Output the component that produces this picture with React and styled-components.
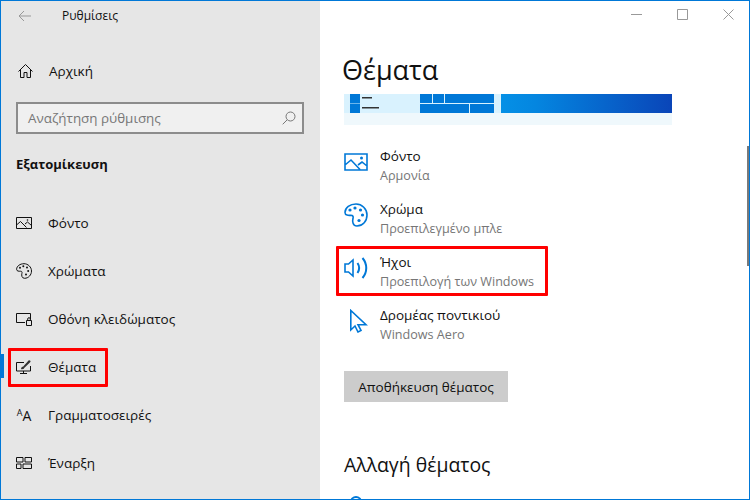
import React from 'react';
import styled, { createGlobalStyle } from 'styled-components';

const Global = createGlobalStyle`
    html, body { margin: 0; padding: 0; background: #fff; }
    * { box-sizing: border-box; }
`

const Win = styled.div`
    width: 750px;
    height: 500px;
    border: 1px solid #0078d7;
    display: flex;
    overflow: hidden;
    font-family: "Open Sans", "Noto Sans", sans-serif;
    color: #111;
`
const Side = styled.div`
    width: 319px;
    height: 498px;
    flex: none;
    background: #e6e6e6;
    overflow: hidden;
`
const TitleBar = styled.div`
    height: 29px;
    display: flex;
    align-items: center;
    padding-left: 17px;
    gap: 30px;
    font-size: 12px;
`
const HomeRow = styled.div`
    height: 48px;
    margin-top: 17px;
    display: flex;
    align-items: center;
    padding-left: 17px;
    gap: 16px;
    font-size: 13.5px;
`
const Search = styled.div`
    height: 32px;
    margin: 7px 16px 0 15px;
    border: 2px solid #8c8c8c;
    background: #f0f0f0;
    display: flex;
    align-items: center;
    justify-content: space-between;
    padding: 0 6px 0 10px;
    font-size: 13.4px;
    color: #777;
`
const SectionTitle = styled.div`
    margin: 20px 0 0 15px;
    height: 20px;
    line-height: 20px;
    font-size: 13px;
    font-weight: 700;
`
const NavList = styled.div`
    margin-top: 25px;
    display: flex;
    flex-direction: column;
`
const NavItem = styled.div`
    position: relative;
    height: 48px;
    display: flex;
    align-items: center;
    padding-left: 15px;
    gap: 16px;
    font-size: 13.5px;
`
const NavIcon = styled.span`
    width: 16px;
    height: 16px;
    flex: none;
    display: flex;
    align-items: center;
    justify-content: center;
`
const Indicator = styled.span`
    position: absolute;
    left: 0;
    top: 11px;
    width: 3px;
    height: 24px;
    background: #0078d7;
`
const RedBox = styled.span`
    position: absolute;
    left: ${props => props.left}px;
    top: ${props => props.top}px;
    width: ${props => props.w}px;
    height: ${props => props.h}px;
    border: 3px solid #f00;
    border-radius: 1px;
    pointer-events: none;
`
const FontGlyph = styled.span`
    display: flex;
    align-items: flex-end;
    color: #111;
    font-family: "Open Sans", sans-serif;
    line-height: 1;
    span:first-child { font-size: 9px; margin-bottom: 6px; }
    span:last-child { font-size: 14px; }
`

const Main = styled.div`
    position: relative;
    flex: 1;
    height: 498px;
    overflow: hidden;
    background: #fff;
`
const Controls = styled.div`
    height: 27px;
    display: flex;
    align-items: center;
    justify-content: flex-end;
    gap: 35px;
    padding-right: 15px;
`
const Content = styled.div`
    padding-left: 24px;
    display: flex;
    flex-direction: column;
`
const PageTitle = styled.h1`
    margin: 20px 0 0 -2px;
    height: 46px;
    line-height: 43px;
    font-size: 27px;
    font-weight: 400;
`
const Preview = styled.svg`
    display: block;
    width: 328px;
    height: 31px;
`
const Options = styled.div`
    margin-top: 21px;
    display: flex;
    flex-direction: column;
`
const Option = styled.div`
    position: relative;
    height: 53px;
    display: flex;
    gap: 12px;
`
const OptionIcon = styled.span`
    width: 24px;
    height: 32px;
    flex: none;
    display: flex;
    align-items: center;
    justify-content: center;
`
const OptionText = styled.div`
    display: flex;
    flex-direction: column;
`
const OptionName = styled.span`
    font-size: 13.5px;
    height: 21px;
    line-height: 20px;
`
const OptionSub = styled.span`
    font-size: 12.6px;
    height: 18px;
    line-height: 18px;
    color: #767676;
`
const SaveButton = styled.div`
    margin-top: 13px;
    width: 164px;
    height: 31px;
    background: #ccc;
    display: flex;
    align-items: center;
    justify-content: center;
    font-size: 13.5px;
`
const SubHeading = styled.h2`
    margin: 48px 0 0 0;
    height: 30px;
    line-height: 30px;
    font-size: 19.4px;
    font-weight: 400;
`
const PartialIcon = styled.span`
    display: block;
    margin: 16px 0 0 6px;
    width: 12px;
    height: 12px;
    border: 2px solid #0078d7;
    border-radius: 50%;
`
const Scrollbar = styled.span`
    position: absolute;
    right: 0;
    top: 145px;
    width: 2px;
    height: 120px;
    background: #7a7a7a;
`

const line = { fill: 'none', stroke: 'currentColor', strokeWidth: 1 };

const BackIcon = () => (
    <svg width="14" height="12" viewBox="0 0 14 12" color="#999">
        <path d="M13 6H1M6 1L1 6l5 5" {...line} />
    </svg>
);
const HomeIcon = () => (
    <svg width="15" height="14" viewBox="0 0 15 14" color="#111">
        <path d="M.5 7.5l7-7 7 7M2.5 5.5v8h3.5v-5h3v5h3.5v-8" {...line} />
    </svg>
);
const SearchIcon = () => (
    <svg width="14" height="14" viewBox="0 0 14 14" color="#777">
        <circle cx="8.5" cy="5.5" r="4.5" {...line} />
        <path d="M5.2 8.8L.7 13.3" {...line} />
    </svg>
);
const PictureIcon = () => (
    <svg width="16" height="12" viewBox="0 0 16 12" color="#111">
        <path d="M.5.5h15v11H.5zM.5 8l4-3.5 6 6M9 7l2.5-2 4 3.5" {...line} />
        <circle cx="11.5" cy="3" r=".8" fill="currentColor" />
    </svg>
);
const PaletteIcon = () => (
    <svg width="16" height="16" viewBox="0 0 16 16" color="#111">
        <path d="M8 .7C4 .7.6 3.2.6 6.3c0 2 2.4 2 3.8 1.9 1.6 0 1.9.9 1.5 2.2-.5 1.7-.2 4.9 2.6 4.9 4 0 7-3.4 7-7.3S12 .7 8 .7z" {...line} />
        <circle cx="4" cy="4.7" r="1" fill="currentColor" />
        <circle cx="7.3" cy="3.2" r="1" fill="currentColor" />
        <circle cx="11" cy="4.5" r="1" fill="currentColor" />
        <circle cx="12.2" cy="8" r="1" fill="currentColor" />
        <circle cx="10" cy="11.5" r="1" fill="currentColor" />
    </svg>
);
const LockIcon = () => (
    <svg width="16" height="13" viewBox="0 0 16 13" color="#111">
        <path d="M9 9.5H.5V.5h14v6M10.5 7.5h5v5h-5zM11.7 7.5V6a1.3 1.3 0 0 1 2.6 0v1.5" {...line} />
    </svg>
);
const ThemeIcon = () => (
    <svg width="16" height="16" viewBox="0 0 16 16" color="#111">
        <path d="M8 3.5H.5v8.500h14V7M7.500 12v2.500M4 14.500h7" {...line} />
        <path d="M5 10c.2-1.600 1-2.200 2-2.200L12.800 1.300c.7-.6 2.300.8 1.600 1.600L8.200 9C7.800 10.200 6.400 10.400 5 10z" fill="#333" />
    </svg>
);
const StartIcon = () => (
    <svg width="16" height="12" viewBox="0 0 16 12" color="#111">
        <path d="M.5.5h6.500v4.500H.5zM9 .5h6.500v4.500H9zM.5 7h4.500v4.500H.5zM7 7h8.500v4.500H7z" {...line} />
    </svg>
);

const blue = { fill: 'none', stroke: '#0078d7', strokeWidth: 1.6 };

const BigPicture = () => (
    <svg width="24" height="18" viewBox="0 0 24 18">
        <path d="M1 1h22v16H1zM1 12l6-5 9 9.500M14 12l4-3 5 4" {...blue} />
        <circle cx="17.500" cy="5" r="1.500" fill="#0078d7" />
    </svg>
);
const BigPalette = () => (
    <svg width="24" height="24" viewBox="0 0 24 24">
        <path d="M12 1C6 1 1 4.800 1 9.500c0 3 3.600 3 5.700 2.800 2.400 0 2.800 1.400 2.300 3.300-.8 2.600-.3 7.400 3.900 7.400C18.900 23 23 18 23 12S18 1 12 1z" {...blue} />
        <circle cx="6" cy="7" r="1.600" fill="#0078d7" />
        <circle cx="11" cy="5" r="1.600" fill="#0078d7" />
        <circle cx="16.500" cy="7" r="1.600" fill="#0078d7" />
        <circle cx="18.500" cy="12" r="1.600" fill="#0078d7" />
        <circle cx="15" cy="17.500" r="1.600" fill="#0078d7" />
    </svg>
);
const BigSpeaker = () => (
    <svg width="24" height="24" viewBox="0 0 24 24">
        <path d="M1 8h3.500L9 4v16l-4.500-4H1z" {...blue} />
        <path d="M13.500 7c2 3 2 7 0 10M18.500 2c5 6 5 14 0 20" {...blue} strokeWidth="2" />
    </svg>
);
const BigCursor = () => (
    <svg width="24" height="24" viewBox="0 0 24 24">
        <path d="M6.800 1.500V21l4.200-4 3 6 3-1.500-3-5.800H22z" {...blue} />
    </svg>
);

const PreviewArt = () => (
    <Preview viewBox="0 0 328 31">
        <defs>
            <linearGradient id="accent" x1="0" x2="1">
                <stop offset="0" stopColor="#0590e6" />
                <stop offset="0.2" stopColor="#0486e0" />
                <stop offset="1" stopColor="#0a45b8" />
            </linearGradient>
        </defs>
        <rect width="328" height="31" fill="#eff8fc" />
        <rect width="157" height="19" fill="#d9f2fe" />
        <rect x="157" width="171" height="19" fill="url(#accent)" />
        <rect x="6" width="10" height="9" fill="#0078d7" />
        <rect x="6" y="9.500" width="10" height="9.500" fill="#0078d7" />
        <rect x="18" y="3" width="10" height="1.500" fill="#333" />
        <rect x="18" y="13" width="17" height="1.500" fill="#333" />
        <rect x="76" width="12" height="9" fill="#0078d7" />
        <rect x="89" width="11" height="9" fill="#0078d7" />
        <rect x="101" width="49" height="9" fill="#0078d7" />
        <rect x="76" y="10" width="49" height="9" fill="#0078d7" />
        <rect x="126" y="10" width="24" height="9" fill="#0078d7" />
    </Preview>
);

function App() {
    return (
        <Win>
            <Global />
            <Side>
                <TitleBar><BackIcon /><span>Ρυθμίσεις</span></TitleBar>
                <HomeRow><HomeIcon /><span>Αρχική</span></HomeRow>
                <Search><span>Αναζήτηση ρύθμισης</span><SearchIcon /></Search>
                <SectionTitle>Εξατομίκευση</SectionTitle>
                <NavList>
                    <NavItem><NavIcon><PictureIcon /></NavIcon>Φόντο</NavItem>
                    <NavItem><NavIcon><PaletteIcon /></NavIcon>Χρώματα</NavItem>
                    <NavItem><NavIcon><LockIcon /></NavIcon>Οθόνη κλειδώματος</NavItem>
                    <NavItem>
                        <Indicator />
                        <NavIcon><ThemeIcon /></NavIcon>Θέματα
                        <RedBox left={7} top={5} w={100} h={39} />
                    </NavItem>
                    <NavItem><NavIcon><FontGlyph><span>A</span><span>A</span></FontGlyph></NavIcon>Γραμματοσειρές</NavItem>
                    <NavItem><NavIcon><StartIcon /></NavIcon>Έναρξη</NavItem>
                </NavList>
            </Side>
            <Main>
                <Controls>
                    <svg width="11" height="11" viewBox="0 0 11 11"><path d="M0 5.500h11" stroke="#999" fill="none" /></svg>
                    <svg width="11" height="11" viewBox="0 0 11 11"><path d="M.5.500h10v10H.5z" stroke="#999" fill="none" /></svg>
                    <svg width="11" height="11" viewBox="0 0 11 11"><path d="M.5.500l10 10M10.500.500l-10 10" stroke="#999" fill="none" /></svg>
                </Controls>
                <Content>
                    <PageTitle>Θέματα</PageTitle>
                    <PreviewArt />
                    <Options>
                        <Option>
                            <OptionIcon><BigPicture /></OptionIcon>
                            <OptionText><OptionName>Φόντο</OptionName><OptionSub>Αρμονία</OptionSub></OptionText>
                        </Option>
                        <Option>
                            <OptionIcon><BigPalette /></OptionIcon>
                            <OptionText><OptionName>Χρώμα</OptionName><OptionSub>Προεπιλεγμένο μπλε</OptionSub></OptionText>
                        </Option>
                        <Option>
                            <OptionIcon><BigSpeaker /></OptionIcon>
                            <OptionText><OptionName>Ήχοι</OptionName><OptionSub>Προεπιλογή των Windows</OptionSub></OptionText>
                            <RedBox left={-8} top={-6} w={212} h={50} />
                        </Option>
                        <Option>
                            <OptionIcon><BigCursor /></OptionIcon>
                            <OptionText><OptionName>Δρομέας ποντικιού</OptionName><OptionSub>Windows Aero</OptionSub></OptionText>
                        </Option>
                    </Options>
                    <SaveButton>Αποθήκευση θέματος</SaveButton>
                    <SubHeading>Αλλαγή θέματος</SubHeading>
                    <PartialIcon />
                </Content>
                <Scrollbar />
            </Main>
        </Win>
    );
}

export default App;
